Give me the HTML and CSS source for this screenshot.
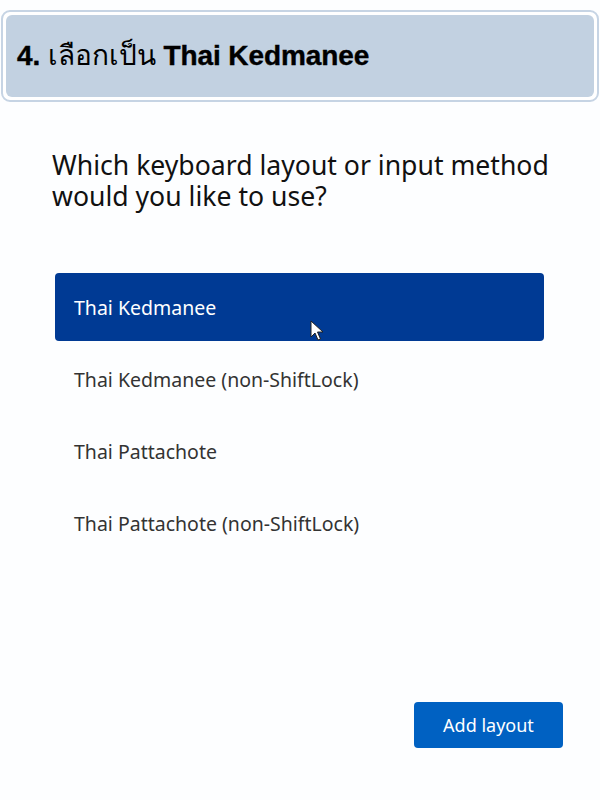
FILE: index.html
```html
<!DOCTYPE html>
<html>
<head>
<meta charset="utf-8">
<link rel="stylesheet" href="styles.css">
</head>
<body>
<div class="page">
  <div class="banner">
    <div class="banner-inner">
      <p class="banner-text"><span class="b">4.</span> <span class="thai">เลือกเป็น</span> <span class="b">Thai Kedmanee</span></p>
    </div>
  </div>
  <div class="content">
    <h1 class="question">Which keyboard layout or input method would you like to use?</h1>
    <ul class="list">
      <li class="item selected">Thai Kedmanee
        <svg class="cursor" width="14" height="22" viewBox="0 0 14 22"><path d="M1 1 L1 17 L5 13 L8 20 L10.5 19 L7.5 12 L13 12 Z" fill="#fff" stroke="#222" stroke-width="1"/></svg>
      </li>
      <li class="item">Thai Kedmanee (non-ShiftLock)</li>
      <li class="item">Thai Pattachote</li>
      <li class="item">Thai Pattachote (non-ShiftLock)</li>
    </ul>
  </div>
  <div class="footer">
    <button class="btn">Add layout</button>
  </div>
</div>
</body>
</html>
```
FILE: styles.css
```css
html, body { margin: 0; padding: 0; background: #fff; }
.page { width: 600px; height: 800px; position: relative; overflow: hidden; background: #fdfeff; }
.banner {
  margin: 10px 1px 0 1px;
  height: 92px;
  border: 2px solid #c6d4e4;
  border-radius: 9px;
  background: #fff;
  padding: 3px;
  box-sizing: border-box;
}
.banner-inner {
  height: 100%;
  background: #c2d1e1;
  border-radius: 6px;
  display: flex;
  align-items: center;
  padding-left: 11px;
  padding-bottom: 2px;
  box-sizing: border-box;
}
.banner-text {
  margin: 0;
  font-family: "Liberation Sans", Arial, sans-serif;
  font-size: 28px;
  color: #000;
  white-space: nowrap;
  letter-spacing: -0.1px;
}
.b { font-weight: bold; -webkit-text-stroke: 0.4px #000; }
.thai { font-weight: 300; font-family: "Noto Sans", "DejaVu Sans", sans-serif; letter-spacing: 0; }
.content { padding: 48px 0 0 52px; }
.question {
  margin: 0;
  font-family: "Noto Sans", sans-serif;
  font-weight: 400;
  font-size: 26.6px;
  line-height: 31px;
  color: #111;
  width: 540px;
}
.list { list-style: none; margin: 61px 0 0 3px; padding: 0; width: 489px; }
.item {
  height: 68px;
  margin-bottom: 4px;
  display: flex;
  align-items: center;
  padding-left: 19px;
  font-family: "Noto Sans", sans-serif;
  font-size: 19.5px;
  color: #333;
  border-radius: 4px;
  position: relative;
}
.item.selected { background: #003a94; color: #fff; }
.cursor { position: absolute; left: 255px; top: 47px; }
.footer { position: absolute; left: 414px; top: 702px; }
.btn {
  width: 149px; height: 46px;
  background: #0061c2;
  border: none;
  border-radius: 4px;
  color: #fff;
  font-family: "Noto Sans", sans-serif;
  font-size: 18px;
  padding: 0;
}
```
